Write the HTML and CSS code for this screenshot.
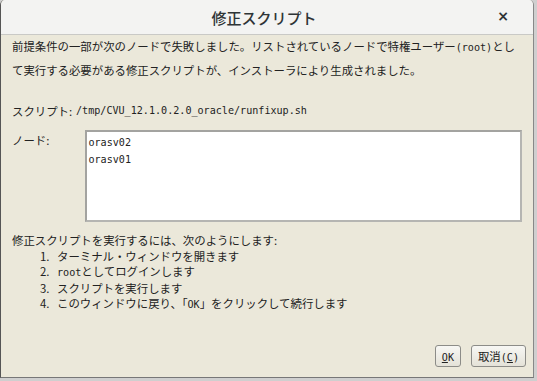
FILE: index.html
```html
<!DOCTYPE html>
<html lang="ja">
<head>
  <meta charset="UTF-8">
  <title>修正スクリプト</title>
  <link rel="stylesheet" href="styles.css">
</head>
<body>
  <div class="dialog">
    <div class="titlebar">
      <div class="title">修正スクリプト</div>
      <div class="close">×</div>
    </div>
    <div class="content">
      <p class="desc">前提条件の一部が次のノードで失敗しました。リストされているノードで特権ユーザー<span class="mono">(root)</span>とし<br>て実行する必要がある修正スクリプトが、インストーラにより生成されました。</p>

      <div class="row script-row">
        <div class="label">スクリプト:</div>
        <div class="mono">/tmp/CVU_12.1.0.2.0_oracle/runfixup.sh</div>
      </div>

      <div class="row node-row">
        <div class="label">ノード:</div>
        <div class="nodes">
          <div class="mono">orasv02</div>
          <div class="mono">orasv01</div>
        </div>
      </div>

      <div class="steps">
        <div class="lead">修正スクリプトを実行するには、次のようにします:</div>
        <ol>
          <li><span class="num">1.</span>ターミナル・ウィンドウを開きます</li>
          <li><span class="num">2.</span><span class="mono">root</span>としてログインします</li>
          <li><span class="num">3.</span>スクリプトを実行します</li>
          <li><span class="num">4.</span>このウィンドウに戻り、「<span class="mono">OK</span>」をクリックして続行します</li>
        </ol>
      </div>
    </div>
    <div class="buttons">
      <button class="btn"><span class="mono"><u>O</u>K</span></button>
      <button class="btn">取消<span class="mono">(<u>C</u>)</span></button>
    </div>
  </div>
</body>
</html>
```

FILE: styles.css
```css
body {
  margin: 0;
  background: #cfcfcf;
  font-family: "Noto Sans CJK JP", "DejaVu Sans", sans-serif;
  color: #222;
}

.dialog {
  width: 532px;
  height: 377px;
  background: #ebe8da;
  border-left: 1px solid #555;
  border-right: 1px solid #888;
  border-bottom: 1px solid #777;
  border-radius: 5px 5px 0 0;
  display: flex;
  flex-direction: column;
  overflow: hidden;
}

.titlebar {
  height: 34px;
  flex: none;
  background: #f3f3f2;
  border-bottom: 1px solid #c9c9c6;
  display: flex;
  align-items: center;
  justify-content: center;
  position: relative;
}

.title {
  font-size: 15px;
  font-weight: 500;
  color: #2e3436;
  margin-right: 6px;
}

.close {
  position: absolute;
  right: 24px;
  top: 8px;
  font-family: "DejaVu Sans", sans-serif;
  font-size: 14px;
  font-weight: bold;
  color: #2e3436;
}

.content {
  flex: 1;
  padding: 0 11px;
  font-size: 11.4px;
}

.mono {
  font-family: "DejaVu Sans Mono", monospace;
  font-size: 10.1px;
}

.desc {
  margin: 0;
  line-height: 23px;
}

.row {
  display: flex;
}

.script-row {
  margin-top: 20px;
  line-height: 18px;
}

.script-row .label {
  width: 64px;
}

.node-row {
  margin-top: 10px;
}

.node-row .label {
  width: 74px;
  padding-top: 2px;
}

.nodes {
  width: 434px;
  height: 84px;
  background: #fff;
  border: 2px solid #a3a3a0;
  border-right-color: #b5b5b2;
  border-bottom-color: #b5b5b2;
  padding: 2px 1px;
  line-height: 17px;
}

.steps {
  margin-top: 11px;
  line-height: 15.5px;
}

.steps ol {
  list-style: none;
  margin: 0;
  padding: 0 0 0 28px;
}

.steps .num {
  display: inline-block;
  width: 17px;
}

.buttons {
  flex: none;
  display: flex;
  justify-content: flex-end;
  gap: 10px;
  padding: 0 7px 10px 0;
}

.btn {
  height: 22px;
  padding: 0 6px;
  background: linear-gradient(#f7f7f4, #e4e2d8);
  border: 1px solid #8c8c88;
  border-radius: 3px;
  font-family: "Noto Sans CJK JP", sans-serif;
  font-size: 11.4px;
  color: #222;
}
```
